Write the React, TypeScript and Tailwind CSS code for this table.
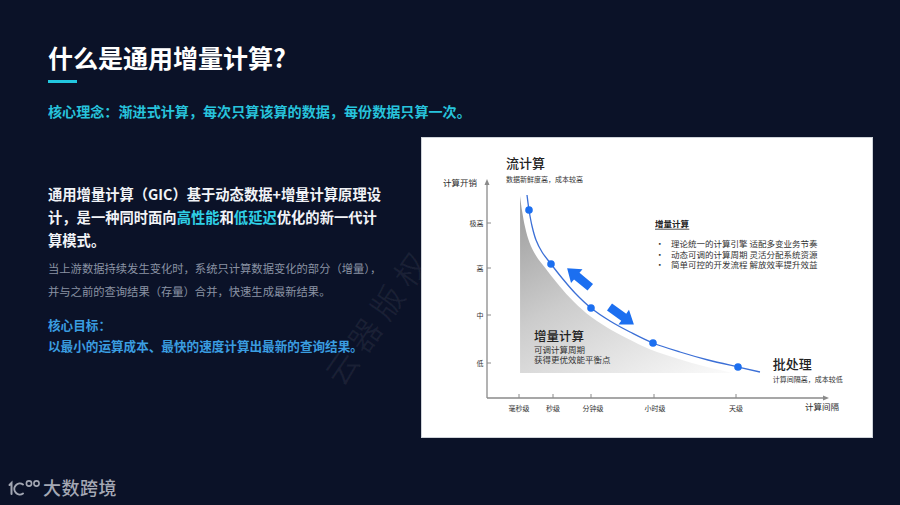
import React from "react";

type P = [number, number];

function smoothPath(pts: P[]): string {
  let d = `M${pts[0][0].toFixed(2)},${pts[0][1].toFixed(2)}`;
  for (let i = 0; i < pts.length - 1; i++) {
    const p0 = pts[i - 1] || pts[i];
    const p1 = pts[i];
    const p2 = pts[i + 1];
    const p3 = pts[i + 2] || p2;
    const c1x = p1[0] + (p2[0] - p0[0]) / 6;
    const c1y = p1[1] + (p2[1] - p0[1]) / 6;
    const c2x = p2[0] - (p3[0] - p1[0]) / 6;
    const c2y = p2[1] - (p3[1] - p1[1]) / 6;
    d += ` C${c1x.toFixed(2)},${c1y.toFixed(2)} ${c2x.toFixed(2)},${c2y.toFixed(2)} ${p2[0].toFixed(2)},${p2[1].toFixed(2)}`;
  }
  return d;
}

function offsetPts(pts: P[], g: number): P[] {
  return pts.map((p, i) => {
    const a = pts[Math.max(0, i - 1)];
    const b = pts[Math.min(pts.length - 1, i + 1)];
    const tx = b[0] - a[0];
    const ty = b[1] - a[1];
    const l = Math.hypot(tx, ty);
    return [p[0] - (ty / l) * g, p[1] + (tx / l) * g] as P;
  });
}

const blue: P[] = [
  [105, 57],
  [107, 72],
  [110, 88],
  [114, 102],
  [120, 114],
  [129, 126],
  [140, 140],
  [153, 155],
  [169, 170],
  [188, 183],
  [208, 194],
  [231, 205],
  [258, 214],
  [286, 222],
  [316, 229],
  [338, 234],
];

const dots: P[] = [
  [107, 72],
  [129, 126],
  [169, 170],
  [231, 205],
  [316, 229],
];

const arrowShape = "-15,-4.3 2.5,-4.3 2.5,-9 15,0 2.5,9 2.5,4.3 -15,4.3";

function Chart() {
  const off = offsetPts(blue, 7);
  const last = off[off.length - 1];
  const grayD = `${smoothPath(off)} L${last[0] + 20},245 L${off[0][0]},245 Z`;
  const txt = "#2a2a2a";
  return (
    <svg
      width="450"
      height="299"
      viewBox="0 0 450 299"
      className="block font-['Noto_Sans_CJK_SC',sans-serif]"
    >
      <defs>
        <linearGradient id="gfill" x1="0" y1="0" x2="0.75" y2="1">
          <stop offset="0" stopColor="#999999" />
          <stop offset="0.45" stopColor="#cccccc" />
          <stop offset="1" stopColor="#fbfbfb" />
        </linearGradient>
        <clipPath id="gclip">
          <rect x="0" y="0" width="450" height="235" />
        </clipPath>
      </defs>

      <path d={grayD} fill="url(#gfill)" clipPath="url(#gclip)" />

      <line x1="65" y1="45" x2="65" y2="260" stroke="#8a8a8a" strokeWidth="1.3" />
      <polygon points="62.5,47 65,41 67.5,47" fill="#8a8a8a" />
      <line x1="65" y1="260" x2="403" y2="260" stroke="#8a8a8a" strokeWidth="1.3" />
      <polygon points="401,257.5 407,260 401,262.5" fill="#8a8a8a" />

      {[
        [85, "极高"],
        [130, "高"],
        [177, "中"],
        [225, "低"],
      ].map(([y, t]) => (
        <g key={t as string}>
          <line x1="65" y1={y as number} x2="69" y2={y as number} stroke="#8a8a8a" strokeWidth="1" />
          <text x="61.5" y={(y as number) + 2.6} fontSize="7" fill="#333" textAnchor="end">
            {t}
          </text>
        </g>
      ))}

      {[
        [97, "毫秒级", 97],
        [131, "秒级", 131],
        [169, "分钟级", 171],
        [232, "小时级", 233],
        [314, "天级", 314],
      ].map(([x, t, lx]) => (
        <g key={t as string}>
          <line x1={x as number} y1="256" x2={x as number} y2="260" stroke="#8a8a8a" strokeWidth="1" />
          <text x={lx as number} y="272.5" fontSize="7" fill="#333" textAnchor="middle">
            {t}
          </text>
        </g>
      ))}

      <text x="21" y="47.7" fontSize="8.5" fill={txt}>
        计算开销
      </text>
      <text x="383" y="271.5" fontSize="8.5" fill={txt}>
        计算间隔
      </text>

      <path d={smoothPath(blue)} fill="none" stroke="#3b6fd6" strokeWidth="1.3" />
      {dots.map(([x, y]) => (
        <circle key={x} cx={x} cy={y} r="3.8" fill="#1c6ff0" />
      ))}

      <polygon points={arrowShape} fill="#1c6ff0" transform="translate(156.7 139.7) rotate(219.5)" />
      <polygon points={arrowShape} fill="#1c6ff0" transform="translate(199.7 177.7) rotate(35.6)" />

      <text x="84" y="30" fontSize="13" fontWeight="500" fill="#222">
        流计算
      </text>
      <text x="84" y="43.7" fontSize="7" fill="#333">
        数据新鲜度高，成本较高
      </text>

      <text x="112" y="203.2" fontSize="12.5" fontWeight="500" fill="#222">
        增量计算
      </text>
      <text x="112" y="214.9" fontSize="8.5" fill="#333">
        可调计算周期
      </text>
      <text x="112" y="225.2" fontSize="8.5" fill="#333">
        获得更优效能平衡点
      </text>

      <text x="350.7" y="231.2" fontSize="13" fontWeight="500" fill="#222">
        批处理
      </text>
      <text x="350.7" y="244" fontSize="7" fill="#333">
        计算间隔高，成本较低
      </text>

      <text x="233" y="88.9" fontSize="8.5" fontWeight="700" fill="#222">
        增量计算
      </text>
      <line x1="233" y1="91.2" x2="267.3" y2="91.2" stroke="#222" strokeWidth="0.8" />
      {[
        [109.2, "理论统一的计算引擎 适配多变业务节奏"],
        [119.9, "动态可调的计算周期 灵活分配系统资源"],
        [130.2, "简单可控的开发流程 解放效率提升效益"],
      ].map(([y, t]) => (
        <g key={t as string}>
          <text x="233.5" y={y as number} fontSize="8.5" fill="#333">
            •
          </text>
          <text x="249" y={y as number} fontSize="8.5" fill="#333">
            {t}
          </text>
        </g>
      ))}
    </svg>
  );
}

function Logo() {
  return (
    <svg width="33" height="17" viewBox="0 0 33 17" fill="none" stroke="#a3a7b3" strokeWidth="2" strokeLinecap="round">
      <path d="M1.5 6 L3.5 4 L3.5 15" />
      <path d="M15 5.5 A5.5 5.5 0 1 0 15 14.5" />
      <circle cx="21" cy="4.5" r="2.6" strokeWidth="1.6" />
      <circle cx="28.5" cy="4.5" r="2.6" strokeWidth="1.6" />
    </svg>
  );
}

export default function App() {
  return (
    <div className="w-[900px] h-[505px] bg-[#0b1228] relative overflow-hidden flex flex-col font-['Noto_Sans_CJK_SC',sans-serif]">
      <span className="absolute left-[331px] top-[364px] origin-left rotate-[-55deg] text-[32px] leading-[32px] tracking-[8px] text-white/[0.06] whitespace-nowrap select-none">
        云器版权
      </span>

      <div className="relative z-[1] pl-[48px] pt-[45px]">
        <h1 className="text-[25px] leading-[25px] font-bold text-white whitespace-nowrap">
          什么是通用增量计算?
        </h1>
        <div className="mt-[10px] w-[29px] h-[3px] bg-[#22c7df]" />
        <p className="mt-[18px] text-[14.1px] leading-[20px] font-bold text-[#27c3dc] whitespace-nowrap">
          核心理念：渐进式计算，每次只算该算的数据，每份数据只算一次。
        </p>

        <div className="mt-[17px] flex">
          <div className="w-[374px] shrink-0 pt-[44px]">
            <p className="text-[14.3px] leading-[23px] font-semibold text-[#f1f3f7] whitespace-nowrap">
              通用增量计算（GIC）基于动态数据+增量计算原理设
              <br />
              计，是一种同时面向<span className="text-[#2fd0e6]">高性能</span>和
              <span className="text-[#2fd0e6]">低延迟</span>优化的新一代计
              <br />
              算模式。
            </p>
            <p className="mt-[6px] text-[11.3px] leading-[22.5px] text-[#8a92a4] whitespace-nowrap">
              当上游数据持续发生变化时，系统只计算数据变化的部分（增量），
              <br />
              并与之前的查询结果（存量）合并，快速生成最新结果。
            </p>
            <p className="mt-[13px] text-[12.6px] leading-[20.5px] font-semibold text-[#3a9de0] whitespace-nowrap">
              核心目标：
              <br />
              以最小的运算成本、最快的速度计算出最新的查询结果。
            </p>
          </div>
          <div className="w-[450px] h-[299px] shrink-0 bg-white shadow-[0_0_0_1px_#cfd3d9]">
            <Chart />
          </div>
        </div>
      </div>

      <div className="mt-auto flex items-center pl-[8px] pb-[8px] gap-[2px]">
        <Logo />
        <span className="text-[18px] leading-[20px] font-medium text-[#a4a8b4] tracking-[0.5px]">
          大数跨境
        </span>
      </div>
    </div>
  );
}
